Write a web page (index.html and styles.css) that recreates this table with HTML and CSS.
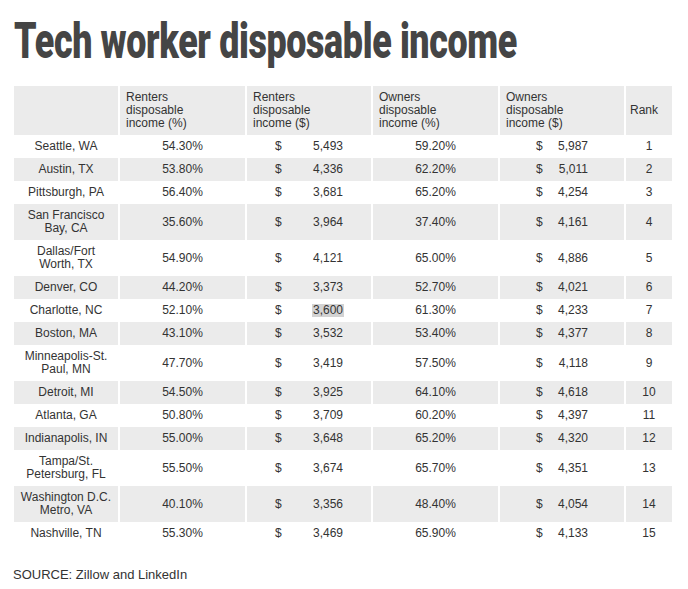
FILE: index.html
```html
<!DOCTYPE html>
<html lang="en">
<head>
<meta charset="utf-8">
<title>Tech worker disposable income</title>
<link rel="stylesheet" href="styles.css">
</head>
<body>
<div class="page">
  <h1 class="title">Tech worker disposable income</h1>
  <table class="data">
    <colgroup>
      <col class="c-city"><col class="c-pct"><col class="c-usd"><col class="c-pct"><col class="c-usd"><col class="c-rank">
    </colgroup>
    <thead>
      <tr>
        <th></th>
        <th>Renters<br>disposable<br>income (%)</th>
        <th>Renters<br>disposable<br>income ($)</th>
        <th>Owners<br>disposable<br>income (%)</th>
        <th>Owners<br>disposable<br>income ($)</th>
        <th class="h-rank">Rank</th>
      </tr>
    </thead>
    <tbody>
      <tr><td>Seattle, WA</td><td>54.30%</td><td class="usd r"><span class="m"><span>$</span><span>5,493</span></span></td><td>59.20%</td><td class="usd o"><span class="m"><span>$</span><span>5,987</span></span></td><td>1</td></tr>
      <tr><td>Austin, TX</td><td>53.80%</td><td class="usd r"><span class="m"><span>$</span><span>4,336</span></span></td><td>62.20%</td><td class="usd o"><span class="m"><span>$</span><span>5,011</span></span></td><td>2</td></tr>
      <tr><td>Pittsburgh, PA</td><td>56.40%</td><td class="usd r"><span class="m"><span>$</span><span>3,681</span></span></td><td>65.20%</td><td class="usd o"><span class="m"><span>$</span><span>4,254</span></span></td><td>3</td></tr>
      <tr><td>San Francisco<br>Bay, CA</td><td>35.60%</td><td class="usd r"><span class="m"><span>$</span><span>3,964</span></span></td><td>37.40%</td><td class="usd o"><span class="m"><span>$</span><span>4,161</span></span></td><td>4</td></tr>
      <tr><td>Dallas/Fort<br>Worth, TX</td><td>54.90%</td><td class="usd r"><span class="m"><span>$</span><span>4,121</span></span></td><td>65.00%</td><td class="usd o"><span class="m"><span>$</span><span>4,886</span></span></td><td>5</td></tr>
      <tr><td>Denver, CO</td><td>44.20%</td><td class="usd r"><span class="m"><span>$</span><span>3,373</span></span></td><td>52.70%</td><td class="usd o"><span class="m"><span>$</span><span>4,021</span></span></td><td>6</td></tr>
      <tr><td>Charlotte, NC</td><td>52.10%</td><td class="usd r"><span class="m"><span>$</span><span class="hl">3,600</span></span></td><td>61.30%</td><td class="usd o"><span class="m"><span>$</span><span>4,233</span></span></td><td>7</td></tr>
      <tr><td>Boston, MA</td><td>43.10%</td><td class="usd r"><span class="m"><span>$</span><span>3,532</span></span></td><td>53.40%</td><td class="usd o"><span class="m"><span>$</span><span>4,377</span></span></td><td>8</td></tr>
      <tr><td>Minneapolis-St.<br>Paul, MN</td><td>47.70%</td><td class="usd r"><span class="m"><span>$</span><span>3,419</span></span></td><td>57.50%</td><td class="usd o"><span class="m"><span>$</span><span>4,118</span></span></td><td>9</td></tr>
      <tr><td>Detroit, MI</td><td>54.50%</td><td class="usd r"><span class="m"><span>$</span><span>3,925</span></span></td><td>64.10%</td><td class="usd o"><span class="m"><span>$</span><span>4,618</span></span></td><td>10</td></tr>
      <tr><td>Atlanta, GA</td><td>50.80%</td><td class="usd r"><span class="m"><span>$</span><span>3,709</span></span></td><td>60.20%</td><td class="usd o"><span class="m"><span>$</span><span>4,397</span></span></td><td>11</td></tr>
      <tr><td>Indianapolis, IN</td><td>55.00%</td><td class="usd r"><span class="m"><span>$</span><span>3,648</span></span></td><td>65.20%</td><td class="usd o"><span class="m"><span>$</span><span>4,320</span></span></td><td>12</td></tr>
      <tr><td>Tampa/St.<br>Petersburg, FL</td><td>55.50%</td><td class="usd r"><span class="m"><span>$</span><span>3,674</span></span></td><td>65.70%</td><td class="usd o"><span class="m"><span>$</span><span>4,351</span></span></td><td>13</td></tr>
      <tr><td>Washington D.C.<br>Metro, VA</td><td>40.10%</td><td class="usd r"><span class="m"><span>$</span><span>3,356</span></span></td><td>48.40%</td><td class="usd o"><span class="m"><span>$</span><span>4,054</span></span></td><td>14</td></tr>
      <tr><td>Nashville, TN</td><td>55.30%</td><td class="usd r"><span class="m"><span>$</span><span>3,469</span></span></td><td>65.90%</td><td class="usd o"><span class="m"><span>$</span><span>4,133</span></span></td><td>15</td></tr>
    </tbody>
  </table>
  <p class="source">SOURCE: Zillow and LinkedIn</p>
</div>
</body>
</html>
```

FILE: styles.css
```css
html, body {
  margin: 0;
  padding: 0;
  background: #ffffff;
}

.page {
  padding: 0 12px;
  font-family: "Liberation Sans", Arial, sans-serif;
  color: #333333;
}

.title {
  margin: 16px 0 20px 2px;
  font-family: Roboto, "Liberation Sans", sans-serif;
  font-weight: 900;
  font-size: 50px;
  line-height: 50px;
  color: #454545;
  white-space: nowrap;
  transform: scaleX(0.717);
  transform-origin: left center;
  letter-spacing: -0.5px;
}

.data {
  table-layout: fixed;
  width: 662px;
  border-collapse: separate;
  border-spacing: 2px 0;
  font-size: 12px;
  line-height: 13px;
}

.c-city { width: 104px; }
.c-pct { width: 125px; }
.c-usd { width: 124px; }
.c-rank { width: 46px; }

.data th {
  background: #ebebeb;
  font-weight: normal;
  text-align: left;
  vertical-align: middle;
  padding: 5px 6px;
}

.data th.h-rank {
  padding-left: 4px;
}

.data td {
  padding: 5px 2px;
  text-align: center;
  vertical-align: middle;
}

.data tbody tr:nth-child(even) td {
  background: #ebebeb;
}

.data td.usd.r {
  padding-left: 28px;
  padding-right: 28px;
}

.data td.usd.o {
  padding-left: 36px;
  padding-right: 36px;
}

.m {
  display: flex;
  justify-content: space-between;
}

.hl {
  background: #d3d3d3;
  margin-right: -1px;
  padding: 0 1px;
}

.source {
  margin: 22px 0 0 1px;
  font-size: 13px;
  line-height: 16px;
  color: #333333;
}
```
